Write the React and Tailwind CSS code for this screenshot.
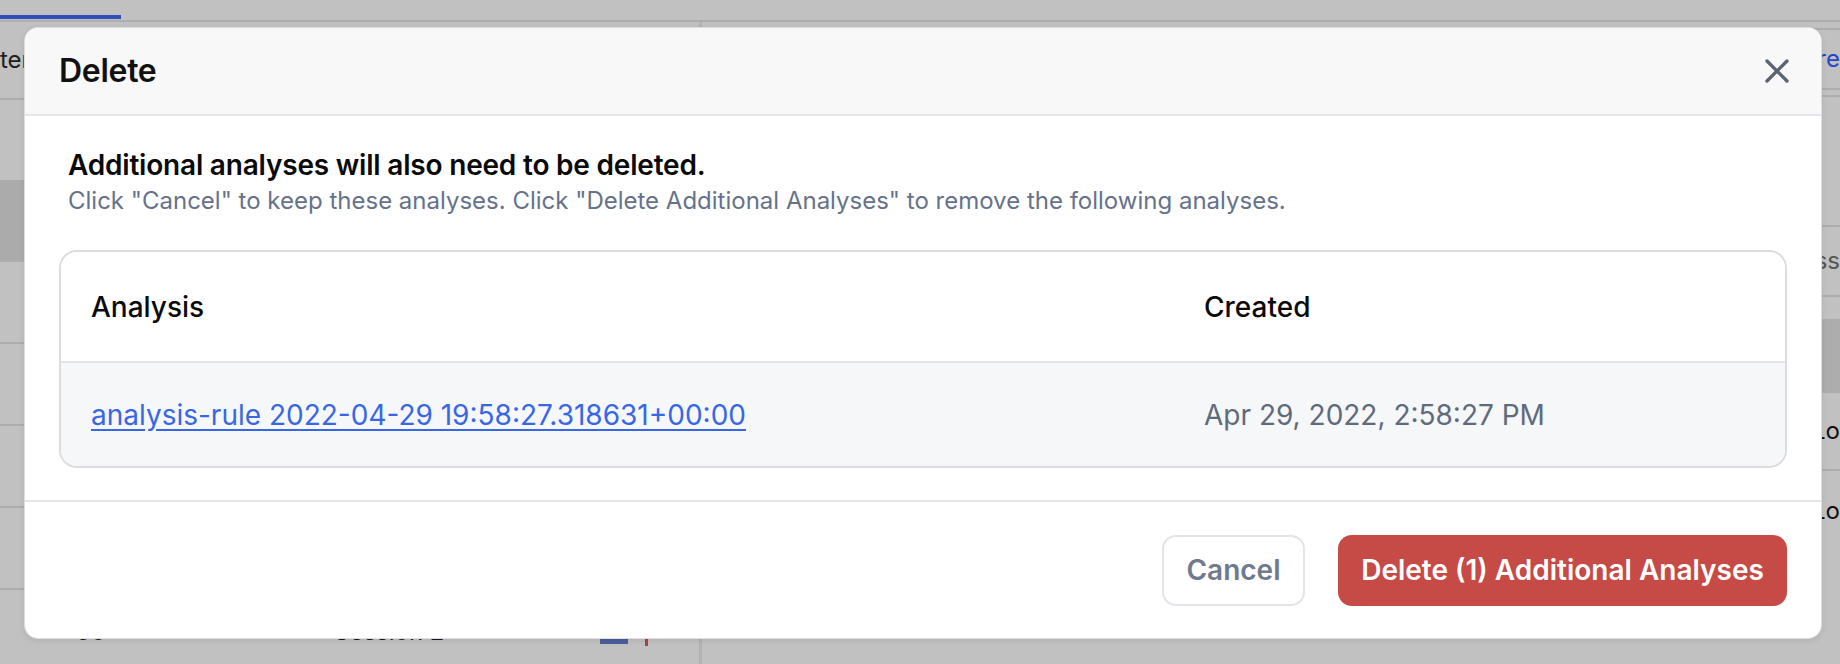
import { X } from 'lucide-react';

function BackgroundPage() {
  return (
    <div className="flex flex-col h-full">
      {/* Top tabs */}
      <div className="h-[22px] shrink-0 border-b-2 border-[#adadad] flex items-end">
        <div className="w-[121px] h-[4px] bg-[#2f4fb8] mb-[1px]" />
      </div>

      <div className="flex flex-1">
        {/* Left list */}
        <div className="w-[702px] border-r-[3px] border-[#b3b3b3] flex flex-col">
          <div className="h-[78px] shrink-0 border-b-2 border-[#adadad] flex items-center text-[24px] text-[#202020]">
            ter
          </div>
          <div className="h-[80px] shrink-0" />
          <div className="h-[82px] shrink-0 bg-[#ababab] border-b-2 border-[#adadad]" />
          <div className="h-[82px] shrink-0 border-b-2 border-[#adadad]" />
          <div className="h-[82px] shrink-0 border-b-2 border-[#adadad]" />
          <div className="h-[82px] shrink-0 border-b-2 border-[#adadad]" />
          <div className="h-[82px] shrink-0 border-b-2 border-[#adadad]" />
          <div className="h-[82px] shrink-0 flex items-start pt-[30px] pl-[76px] text-[24px] leading-[24px] text-[#1a1a1a] whitespace-nowrap">
            <span className="w-[258px]">30</span>
            <span className="w-[266px]">Session 2</span>
            <span className="w-[28px] h-[10px] bg-[#4a5f9a] mt-[14px]" />
            <span className="w-[3px] h-[14px] bg-[#b04040] ml-[17px] mt-[12px]" />
          </div>
        </div>

        {/* Right side */}
        <div className="flex-1 flex flex-col pl-[18px]">
          <div className="h-[8px] shrink-0 border-b-2 border-[#adadad]" />
          <div className="h-[58px] shrink-0 flex items-center justify-end text-[24px] text-[#2446c4]">re</div>
          <div className="h-[9px] shrink-0 border-y-2 border-[#adadad]" />
          <div className="h-[130px] shrink-0 border-b-2 border-[#adadad]" />
          <div className="h-[70px] shrink-0 flex items-center justify-end text-[24px] text-[#555] border-b-2 border-[#adadad]">
            ss
          </div>
          <div className="h-[22px] shrink-0" />
          <div className="h-[74px] shrink-0 bg-[#adadad]" />
          <div className="h-[78px] shrink-0 flex items-center justify-end text-[24px] text-[#111] border-b-2 border-[#adadad]">
            Lo
          </div>
          <div className="h-[80px] shrink-0 flex items-center justify-end text-[24px] text-[#111]">Lo</div>
        </div>
      </div>
    </div>
  );
}

export default function App() {
  return (
    <div
      className="relative w-[1840px] h-[664px] overflow-hidden bg-[#c1c1c1]"
      style={{ fontFamily: 'Inter, "Noto Sans", sans-serif' }}
    >
      <BackgroundPage />

      {/* Modal */}
      <div className="absolute left-[24px] top-[27px] w-[1798px] h-[612px] bg-white rounded-[14px] border border-[#dedede] overflow-hidden flex flex-col shadow-[0_2px_6px_rgba(0,0,0,0.08)]">
        {/* Header */}
        <div className="h-[88px] shrink-0 bg-[#f8f8f8] border-b-2 border-[#e4e4ea] flex items-center justify-between pl-[34px] pr-[24px]">
          <h2 className="text-[32px] font-semibold text-[#111] tracking-[-0.3px]">Delete</h2>
          <X size={40} strokeWidth={2} className="text-[#5c6470]" />
        </div>

        {/* Body */}
        <div className="flex-1 flex flex-col px-[34px] pt-[31px]">
          <div className="pl-[9px]">
            <p className="text-[28px] leading-[36px] font-semibold text-[#0a0a0a] tracking-[-0.2px]">
              Additional analyses will also need to be deleted.
            </p>
            <p className="text-[24px] leading-[35px] text-[#66728a]">
              Click "Cancel" to keep these analyses. Click "Delete Additional Analyses" to remove the following analyses.
            </p>
          </div>

          <div className="mt-[32px] rounded-[18px] border-2 border-[#dcdcdf] overflow-hidden">
            <div className="h-[111px] flex items-center border-b-2 border-[#e4e4ea] bg-white">
              <div className="w-[1113px] pl-[30px] text-[28px] font-medium text-[#0a0a0a]">Analysis</div>
              <div className="flex-1 pl-[30px] text-[28px] font-medium text-[#0a0a0a]">Created</div>
            </div>
            <div className="h-[103px] flex items-center bg-[#f6f7f9]">
              <div className="w-[1113px] pl-[30px]">
                <a href="#" className="text-[28px] text-[#3867e6] underline underline-offset-[4px]">
                  analysis-rule 2022-04-29 19:58:27.318631+00:00
                </a>
              </div>
              <div className="flex-1 pl-[30px] text-[28px] text-[#5f6b7b]">Apr 29, 2022, 2:58:27 PM</div>
            </div>
          </div>
        </div>

        {/* Footer */}
        <div className="h-[138px] shrink-0 border-t-2 border-[#e4e4ea] flex items-center justify-end gap-[33px] px-[34px]">
          <button className="h-[71px] w-[143px] rounded-[14px] border-2 border-[#e2e4ea] bg-white text-[28px] font-semibold text-[#6f7a8e]">
            Cancel
          </button>
          <button className="h-[71px] w-[449px] rounded-[14px] bg-[#c64a45] text-[28px] font-semibold text-white">
            Delete (1) Additional Analyses
          </button>
        </div>
      </div>
    </div>
  );
}
